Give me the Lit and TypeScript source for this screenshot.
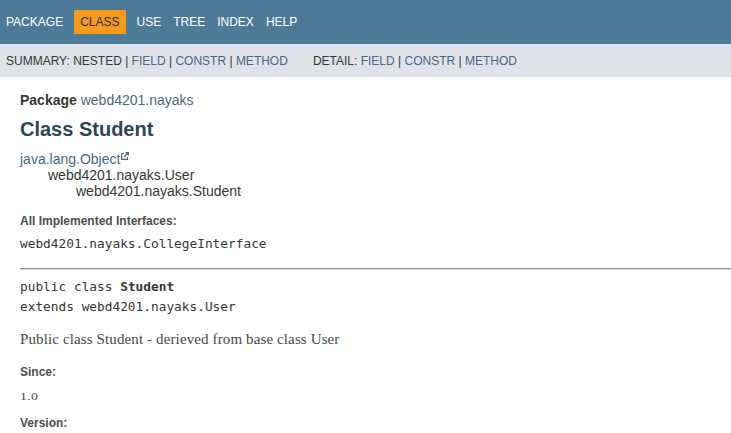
import { LitElement, html, css } from "lit";
import { customElement } from "lit/decorators.js";

@customElement("app-root")
export class AppRoot extends LitElement {
  static styles = css`
    :host { display: block; height: 433px; overflow: hidden; background: #fff; color: #353833; font: 14px/16px "Liberation Sans", Arial, sans-serif; white-space: nowrap; }
    .top { display: flex; align-items: center; box-sizing: border-box; height: 44px; padding: 0 6px; gap: 12px; background: #4d7a97; color: #fff; font-size: 12px; }
    .active { background: #f8981d; color: #253441; padding: 4px 6px; margin: 0 -1px; }
    .sub { display: flex; align-items: center; height: 33px; padding: 0 6px; gap: 25px; background: #dee3e9; font-size: 12px; }
    .link { color: #4a6782; }
    main { display: block; padding: 15px 0 0 20px; }
    h1 { margin: 9px 0 10px; font-size: 20px; line-height: 24px; color: #2c4557; }
    .tree { display: flex; flex-direction: column; }
    .level1 { padding-left: 28px; }
    .level2 { padding-left: 56px; }
    .ext { width: 8px; height: 8px; margin-left: 1px; vertical-align: 4px; }
    .label { font-size: 12px; line-height: 14px; font-weight: bold; color: #4e4e4e; }
    .mono { font: 12.8px/20px "DejaVu Sans Mono", monospace; }
    .interfaces { margin-top: 15px; }
    .interfaces .mono { margin-top: 6px; }
    hr { height: 1px; margin: 14px 0 7px; border: 0; border-top: 1px solid #8f8f8f; background: #d8d8d8; }
    .serif { font-family: "Liberation Serif", serif; color: #474747; }
    .description { margin: 13px 0 17px; font-size: 15px; line-height: 18px; letter-spacing: 0.12px; }
    .value { font-size: 11px; line-height: 14px; margin: 10px 0 13px; letter-spacing: 0.3px; transform: scaleX(1.25); transform-origin: left; }
  `;

  render() {
    const members = html`<span class="link">FIELD</span> | <span class="link">CONSTR</span> | <span class="link">METHOD</span>`;
    return html`
      <nav class="top">
        <span>PACKAGE</span><span class="active">CLASS</span><span>USE</span><span>TREE</span><span>INDEX</span><span>HELP</span>
      </nav>
      <div class="sub">
        <span>SUMMARY: NESTED | ${members}</span><span>DETAIL: ${members}</span>
      </div>
      <main>
        <div><b>Package</b> <span class="link">webd4201.nayaks</span></div>
        <h1>Class Student</h1>
        <div class="tree">
          <div class="link">java.lang.Object<svg class="ext" viewBox="0 0 8 8" fill="none" stroke="#4a6782" stroke-width="1.2"><path d="M3 1.5H.6v5.9h5.9V5M3 5l4-4M4.5.6h2.9v2.9"/></svg></div>
          <div class="level1">webd4201.nayaks.User</div>
          <div class="level2">webd4201.nayaks.Student</div>
        </div>
        <div class="interfaces">
          <div class="label">All Implemented Interfaces:</div>
          <div class="mono">webd4201.nayaks.CollegeInterface</div>
        </div>
        <hr>
        <div class="mono">public class <b>Student</b><br>extends webd4201.nayaks.User</div>
        <div class="serif description">Public class Student - derieved from base class User</div>
        <div class="label">Since:</div>
        <div><div class="serif value">1.0</div></div>
        <div class="label">Version:</div>
      </main>`;
  }
}
